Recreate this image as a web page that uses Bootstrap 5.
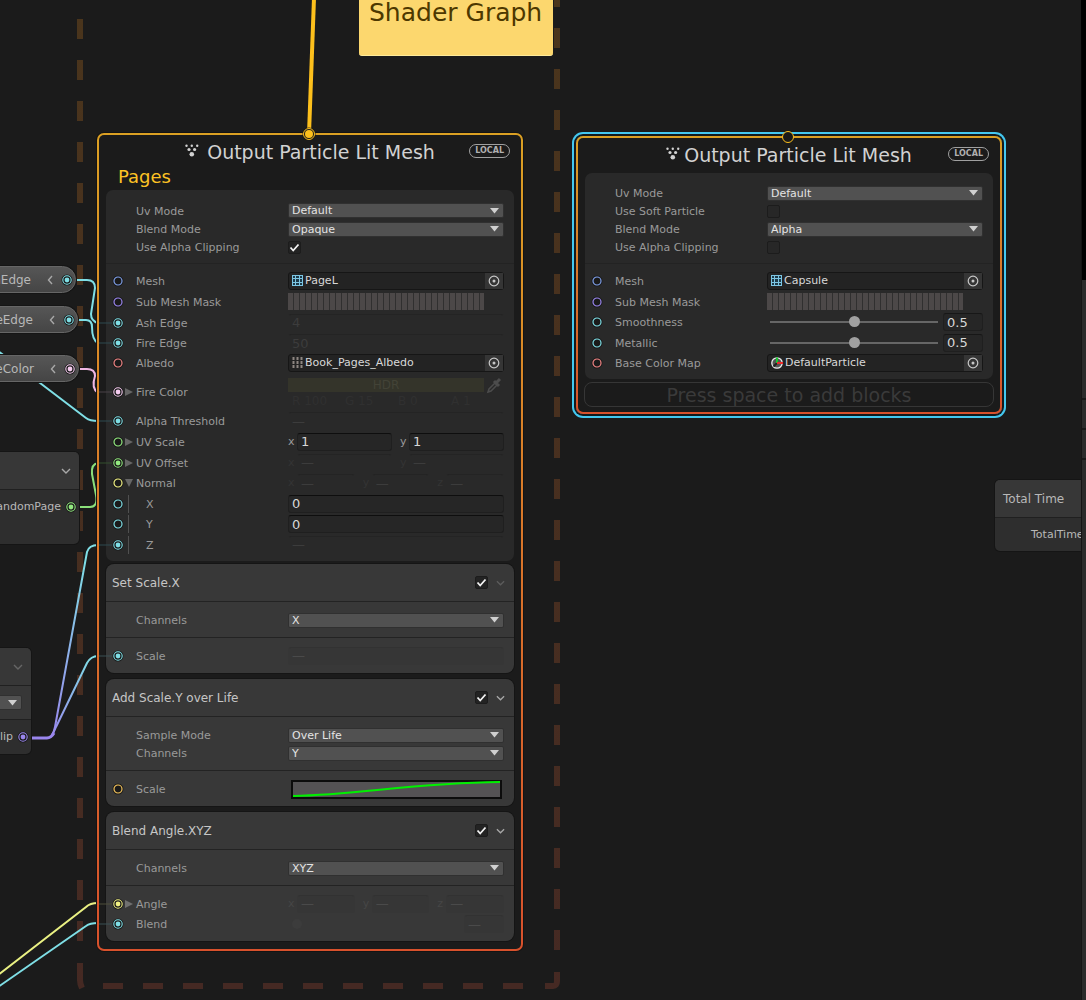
<!DOCTYPE html>
<html lang="en">
<head>
<meta charset="utf-8">
<meta name="viewport" content="width=device-width, initial-scale=1">
<title>VFX Graph</title>
<link href="https://cdn.jsdelivr.net/npm/bootstrap@5.3.0/dist/css/bootstrap.min.css" rel="stylesheet">
<style>
body { background: #1b1b1b; color: #9a9a9a; font: 11px/14px "DejaVu Sans", Verdana, sans-serif; }
.workspace { height: 100vh; min-height: 1000px; }
.canvas { min-width: 0; background: #1b1b1b; }
.inspector { width: 5px; background: #2b2b2b; border-left: 1px solid #151515; border-top: 280px solid #000; }
.inspector div { height: 120px; border-bottom: 2px solid #181818; }
.inspector div + div { height: 30px; }
.wires { width: 100%; height: 100%; overflow: visible; }

/* contexts */
.context { position: absolute; width: 426px; padding: 0 7px 8px; border: 2px solid transparent; border-radius: 7px;
  background: linear-gradient(#1b1b1b, #1b1b1b) padding-box, linear-gradient(#dba023, #d9762a 50%, #d8512c) border-box; box-shadow: 0 0 0 1px #131313; }
.ctx-pages { left: 97px; top: 133px; }
.ctx-capsule { left: 576px; top: 136px; padding-bottom: 5px; box-shadow: 0 0 0 2px #121a1e, 0 0 0 4px #44c8f0; }
.ctx-head { height: 31px; color: #d2d2d2; padding: 0 4px; }
.ctx-head h2 { font-size: 19px; line-height: 22px; font-weight: 400; margin: 0; padding-top: 2px; }
.side { flex: 1 1 0; min-width: 0; }
.pill-local { display: inline-block; font-size: 8px; line-height: 10px; font-weight: 700; color: #b0b0b0; border: 1px solid #a0a0a0; border-radius: 7px; padding: 1px 5px; }
.ctx-label { font-size: 18px; line-height: 22px; color: #fdc324; padding-left: 12px; margin-bottom: 2px; }
.flow-port { position: absolute; top: -8px; left: 50%; margin-left: -8px; z-index: 2; }

/* blocks */
.settings-box { background: #292929; border-radius: 7px; margin-bottom: 3px; }
.block { background: #383838; border-radius: 8px; margin-bottom: 6px; box-shadow: 0 0 0 1px #151515; }
.block:last-child { margin-bottom: 0; }
.block-head { height: 38px; border-bottom: 1px solid #232323; padding: 0 9px 0 6px; color: #c6c6c6; }
.block-head h3 { font-size: 12px; line-height: 16px; font-weight: 400; margin: 0; }
.sect { padding: 9px 0 8px; border-bottom: 1px solid #232323; }
.settings-box .sect { padding: 11px 0 7px; }
.sect-ports { padding: 7px 0; }
.settings-box .sect-ports { padding: 6px 0; }
.prop { display: flex; align-items: center; padding-right: 10px; }
.h18 { height: 18px; } .h19 { height: 19px; } .h20 { height: 20px; } .h21 { height: 21px; } .h38 { height: 38px; }
.port { width: 30px; height: 20px; flex: none; overflow: visible; }
.prop label, .prop .lbl { width: 152px; flex: none; white-space: nowrap; padding-top: 2px; }
.sub-prop label { padding-left: 10px; }
.field { flex: 1 1 0; min-width: 0; }

/* controls */
.pick { --bs-form-select-bg-img: none; appearance: none; width: 100%; height: 15px; padding: 0 16px 0 3px; font: 11px/13px "DejaVu Sans", Verdana, sans-serif; color: #e4e4e4; border: 1px solid #303030; border-radius: 2px;
  background: #515151 url("data:image/svg+xml,%3Csvg xmlns='http://www.w3.org/2000/svg' width='9' height='6'%3E%3Cpath d='M0 0h9L4.500 5.500z' fill='%23d0d0d0'/%3E%3C/svg%3E") no-repeat right 4px center; }
.tick.form-check-input { appearance: none; width: 13px; height: 13px; margin: 0; border: 1px solid #1c1c1c; border-radius: 2px; background-color: #272727; float: none; flex: none; }
.tick.form-check-input:checked { border-color: #1c1c1c; background: #232323 url("data:image/svg+xml,%3Csvg xmlns='http://www.w3.org/2000/svg' width='11' height='11'%3E%3Cpath d='M1.500 5.500l2.700 3L9.500 2.500' fill='none' stroke='%23f4f4f4' stroke-width='1.800'/%3E%3C/svg%3E") no-repeat center; }
.num { width: 100%; min-width: 0; height: 18px; padding: 0 3px; font: 13px/16px "DejaVu Sans", Verdana, sans-serif; color: #d8d8d8; background: #262626; border: 1px solid #1f1f1f; border-top-color: #0e0e0e; border-radius: 3px; }
.num-ghost { color: #3c3c3c; background: transparent; border-color: transparent; border-top-color: #242424; }
.block .num-ghost { color: #4a4a4a; background: #363636; border-top-color: #323232; }
.axis { flex: 1 1 0; min-width: 0; display: flex; align-items: center; }
.prop .axis label { width: 9px; padding: 0; }
.ghost label { color: #343434; }
.block .ghost label { color: #464646; }
.obj { height: 18px; background: #232323; border: 1px solid #161616; border-radius: 3px; color: #d8d8d8; padding-left: 3px; }
.obj span { margin-left: 2px; }
.obj button { width: 18px; height: 16px; background: #353535; border: 0; padding: 0; line-height: 0; margin-left: auto; }
.mask { width: 196px; height: 17px; background: repeating-linear-gradient(90deg, #4c4848 0 5px, #302f2f 5px 6px); }
.hdr { height: 14px; line-height: 14px; background: #34342a; color: #434337; text-align: center; font-size: 12px; }
.rgba { height: 15px; color: #303030; font-size: 12px; }
.curve { display: block; width: 212px; height: 20px; margin-left: 2px; }
.slide.form-range { appearance: none; height: 12px; margin: 0 5px 0 3px; flex: 1 1 0; min-width: 0; }
.slide::-webkit-slider-runnable-track { height: 2px !important; background: #666 !important; border-radius: 0 !important; }
.slide::-webkit-slider-thumb { width: 11px !important; height: 11px !important; margin-top: -5px !important; background: #a0a0a0 !important; box-shadow: none !important; }
.num-slide { width: 40px; flex: none; border-top-color: #171717; }
.drop-hint { height: 25px; border: 1px solid #363636; border-radius: 8px; color: #3a3a3a; font-size: 19px; line-height: 22px; text-align: center; margin: 0 -1px; background: none; width: calc(100% + 2px); padding: 0; }
.icon-btn { background: none; border: 0; padding: 0; line-height: 0; }

/* parameters and operators */
.param { position: absolute; height: 27px; width: 140px; padding-right: 2px; border: 1px solid #666; border-radius: 0 14px 14px 0; background: linear-gradient(#565656, #454545); color: #b8b8b8; font-size: 12px; box-shadow: 0 0 0 1px #151515; }
.p-ash { left: -64px; top: 266px; } .p-fire { left: -62px; top: 306px; } .p-color { left: -61px; top: 355px; }
.op { position: absolute; width: 140px; background: #2e2e2e; border-radius: 5px; box-shadow: 0 0 0 1px #151515; color: #b8b8b8; overflow: hidden; }
.op-head { height: 38px; background: #373737; border-bottom: 1px solid #202020; padding: 0 8px; font-size: 12px; }
.op-out { height: 34px; padding-right: 2px; }
.op-random { left: -61px; top: 452px; height: 92px; }
.op-flip { left: -109px; top: 648px; height: 106px; }
.op-flip .op-set { height: 34px; padding: 0 9px; background: #373737; border-bottom: 1px solid #202020; }
.op-time { left: 995px; top: 480px; height: 71px; }
.op-time .op-out { padding-left: 36px; }
.note { position: absolute; left: 359px; top: -60px; width: 194px; height: 116px; padding: 58px 0 0 10px; background: #fcd76e; border-bottom: 1px solid #ffeb9a; border-radius: 3px; color: #4d3800; font-size: 25px; line-height: 30px; white-space: nowrap; }
.c-blue { color: #7f9fe8; } .c-violet { color: #9a86ee; } .c-cyan { color: #7fdfe6; } .c-red { color: #f28585; } .c-pink { color: #f6cdf0; } .c-green { color: #93ea80; } .c-yellow { color: #f1f183; } .c-amber { color: #f3c35c; }
</style>
</head>
<body>
<svg width="0" height="0" class="position-absolute" aria-hidden="true">
  <defs>
    <symbol id="ring" viewBox="0 0 12 12"><circle cx="6" cy="6" r="5.500" fill="#1a1a1a"/><circle cx="6" cy="6" r="4" fill="none" stroke="currentColor" stroke-width="1.200"/></symbol>
    <symbol id="ring-on" viewBox="0 0 12 12"><circle cx="6" cy="6" r="5.500" fill="#1a1a1a"/><circle cx="6" cy="6" r="4.200" fill="none" stroke="currentColor" stroke-width="1.100"/><circle cx="6" cy="6" r="2.400" fill="currentColor"/></symbol>
    <symbol id="target" viewBox="0 0 12 12"><circle cx="6" cy="6" r="4.800" fill="none" stroke="#c8c8c8" stroke-width="1.200"/><circle cx="6" cy="6" r="1.500" fill="#c8c8c8"/></symbol>
    <symbol id="mesh" viewBox="0 0 11 11"><rect width="11" height="11" fill="#1d3a49"/><path d="M.5 0v11M3.500 0v11M7.500 0v11M10.500 0v11M0 .5h11M0 3.500h11M0 7.500h11M0 10.500h11" stroke="#7cc6e4" stroke-width="1"/></symbol>
    <symbol id="dots" viewBox="0 0 14 13"><g fill="#d2d2d2"><circle cx="1.500" cy="1.800" r="1.200"/><circle cx="6.800" cy="1.800" r="1.200"/><circle cx="12.200" cy="1.800" r="1.200"/><circle cx="4" cy="5.500" r="1.600"/><circle cx="9.600" cy="5.500" r="1.600"/><circle cx="6.800" cy="10.300" r="2.300"/></g></symbol>
    <symbol id="chev" viewBox="0 0 10 6"><path d="M1 1l4 4 4-4" fill="none" stroke="currentColor" stroke-width="1.400"/></symbol>
    <symbol id="chev-left" viewBox="0 0 6 10"><path d="M5 1L1.500 5 5 9" fill="none" stroke="#a8a8a8" stroke-width="1.400"/></symbol>
    <linearGradient id="flipwire" gradientUnits="userSpaceOnUse" x1="0" y1="738" x2="0" y2="560"><stop offset="0" stop-color="#9a86ee"/><stop offset="1" stop-color="#7fdfe6"/></linearGradient>
    <linearGradient id="flipwire2" gradientUnits="userSpaceOnUse" x1="0" y1="738" x2="0" y2="656"><stop offset="0" stop-color="#9a86ee"/><stop offset="1" stop-color="#7fdfe6"/></linearGradient>
    <linearGradient id="dash" gradientUnits="userSpaceOnUse" x1="0" y1="0" x2="0" y2="1000"><stop offset="0" stop-color="#4a351c"/><stop offset="1" stop-color="#452923"/></linearGradient>
  </defs>
</svg>

<div class="workspace d-flex overflow-hidden">
<main class="canvas flex-grow-1 position-relative overflow-hidden">
  <svg class="wires position-absolute top-0 start-0" fill="none" aria-hidden="true">
    <!-- system outline -->
    <g stroke="url(#dash)" stroke-width="6">
      <path d="M80 19V961M80.010 963" stroke-dasharray="20 21"/>
      <path d="M80 963V980Q80 984 82 988"/>
      <path d="M557 -13V952" stroke-dasharray="20 21"/>
      <path d="M556.990 972V981Q557 986 553 986H545"/>
    </g>
    <path d="M103 986H526" stroke="#452923" stroke-width="6" stroke-dasharray="20 20"/>
    <!-- links -->
    <g stroke-width="2" stroke="#7fdfe6">
      <path d="M77 280H87Q95 280 95 288L91 314Q91 321 98 323"/>
      <path d="M78 320H86Q92 320 92 327Q92 340 98 343"/>
      <path d="M-2 351L86 418Q90 421 98 421"/>
      <path d="M-2 987L86 926Q90 923 98 923"/>
      <path d="M-2 975L86 907Q90 903 98 903" stroke="#eaf183"/>
      <path d="M80 369H87Q95 369 95 376Q91 388 98 393" stroke="#f0b8e4"/>
      <path d="M80 507H90Q98 507 96 495L92 474Q91 464 98 463" stroke="#8be07a"/>
      <path d="M52 735Q54 732 55 727L87 552Q89 545 98 545" stroke="url(#flipwire)"/>
      <path d="M52 735Q54 732 56 727L87 663Q91 656 98 656" stroke="url(#flipwire2)"/>
      <path d="M32 738H47Q51 738 54 733" stroke="#9a86ee" stroke-width="3"/>
    </g>
    <path d="M314 -2L309 134" stroke="#fdc01c" stroke-width="4"/>
  </svg>

  <div class="note">Shader Graph</div>

  <div class="param p-ash d-flex align-items-center justify-content-end">AshEdge<svg width="6" height="10" class="ms-3 me-2"><use href="#chev-left"/></svg><svg width="12" height="12" class="c-cyan"><use href="#ring-on"/></svg></div>
  <div class="param p-fire d-flex align-items-center justify-content-end">FireEdge<svg width="6" height="10" class="ms-3 me-2"><use href="#chev-left"/></svg><svg width="12" height="12" class="c-cyan"><use href="#ring-on"/></svg></div>
  <div class="param p-color d-flex align-items-center justify-content-end">FireColor<svg width="6" height="10" class="ms-3 me-2"><use href="#chev-left"/></svg><svg width="12" height="12" class="c-pink"><use href="#ring-on"/></svg></div>

  <section class="op op-random">
    <div class="op-head d-flex align-items-center justify-content-end"><button class="icon-btn" aria-label="Collapse" style="color:#a8a8a8"><svg width="10" height="6"><use href="#chev"/></svg></button></div>
    <div class="op-out d-flex align-items-center justify-content-end">RandomPage<svg width="12" height="12" class="c-green ms-1"><use href="#ring-on"/></svg></div>
  </section>
  <section class="op op-flip">
    <div class="op-head d-flex align-items-center justify-content-end"><button class="icon-btn" aria-label="Collapse" style="color:#666"><svg width="10" height="6"><use href="#chev"/></svg></button></div>
    <div class="op-set d-flex align-items-center"><select class="form-select pick" aria-label="Type"><option></option></select></div>
    <div class="op-out d-flex align-items-center justify-content-end">Flip<svg width="12" height="12" class="c-violet ms-1"><use href="#ring-on"/></svg></div>
  </section>
  <section class="op op-time">
    <div class="op-head d-flex align-items-center">Total Time</div>
    <div class="op-out d-flex align-items-center">TotalTime</div>
  </section>

  <!-- Pages output -->
  <section class="context ctx-pages">
    <svg class="flow-port" width="14" height="14"><circle cx="7" cy="7" r="6.500" fill="#1a1a1a"/><circle cx="7" cy="7" r="5.500" fill="none" stroke="#fdc01c"/><circle cx="7" cy="7" r="4" fill="#fdc01c"/></svg>
    <header class="ctx-head d-flex align-items-center">
      <span class="side"></span>
      <svg width="14" height="13" class="me-2"><use href="#dots"/></svg><h2>Output Particle Lit Mesh</h2>
      <span class="side text-end"><span class="pill-local">LOCAL</span></span>
    </header>
    <div class="ctx-label">Pages</div>

    <div class="settings-box">
      <div class="sect">
        <div class="prop h19"><span class="port"></span><label for="a1">Uv Mode</label><div class="field"><select id="a1" class="form-select pick"><option>Default</option></select></div></div>
        <div class="prop h18"><span class="port"></span><label for="a2">Blend Mode</label><div class="field"><select id="a2" class="form-select pick"><option>Opaque</option></select></div></div>
        <div class="prop h18"><span class="port"></span><label for="a3">Use Alpha Clipping</label><input id="a3" type="checkbox" class="form-check-input tick" checked></div>
      </div>
      <div class="sect-ports">
        <div class="prop h21"><svg class="port c-blue"><use href="#ring" x="6" y="4" width="12" height="12"/></svg><span class="lbl">Mesh</span><div class="field obj d-flex align-items-center"><svg width="11" height="11"><use href="#mesh"/></svg><span>PageL</span><button aria-label="Select mesh"><svg width="12" height="12"><use href="#target"/></svg></button></div></div>
        <div class="prop h21"><svg class="port c-violet"><use href="#ring" x="6" y="4" width="12" height="12"/></svg><span class="lbl">Sub Mesh Mask</span><div class="mask"></div></div>
        <div class="prop h21"><svg class="port c-cyan"><path d="M-7 10H6" stroke="#2f4b50" stroke-width="1"/><use href="#ring-on" x="6" y="4" width="12" height="12"/></svg><label for="a4">Ash Edge</label><div class="field"><input id="a4" class="num num-ghost" value="4" readonly></div></div>
        <div class="prop h20"><svg class="port c-cyan"><path d="M-7 10H6" stroke="#2f4b50"/><use href="#ring-on" x="6" y="4" width="12" height="12"/></svg><label for="a5">Fire Edge</label><div class="field"><input id="a5" class="num num-ghost" value="50" readonly></div></div>
        <div class="prop h20"><svg class="port c-red"><use href="#ring" x="6" y="4" width="12" height="12"/></svg><span class="lbl">Albedo</span><div class="field obj d-flex align-items-center"><svg width="11" height="12"><path d="M1.500 0v12M5.500 0v12M9.500 0v12" stroke="#8d8681" stroke-width="2" stroke-dasharray="3 1"/></svg><span>Book_Pages_Albedo</span><button aria-label="Select texture"><svg width="12" height="12"><use href="#target"/></svg></button></div></div>
        <div class="prop h38"><svg class="port c-pink"><path d="M-7 10H6" stroke="#4a4249"/><use href="#ring-on" x="6" y="4" width="12" height="12"/><path d="M19 6v8l8-4z" fill="#666"/></svg><span class="lbl">Fire Color</span>
          <div class="field"><div class="d-flex align-items-center"><div class="hdr flex-grow-1">HDR</div><svg width="20" height="18" viewBox="0 0 20 18"><path d="M4 16l1-3 6-6 2 2-6 6z" fill="none" stroke="#4c4c4c" stroke-width="1.500"/><path d="M10 5l5 5M12 7l4-4" stroke="#4c4c4c" stroke-width="3"/></svg></div>
          <div class="rgba d-flex ps-1"><span class="side">R 100</span><span class="side">G 15</span><span class="side">B 0</span><span class="side">A 1</span></div></div></div>
        <div class="prop h20"><svg class="port c-cyan"><path d="M-7 10H6" stroke="#2f4b50"/><use href="#ring-on" x="6" y="4" width="12" height="12"/></svg><label for="a6">Alpha Threshold</label><div class="field"><input id="a6" class="num num-ghost" value="—" readonly></div></div>
        <div class="prop h21"><svg class="port c-green"><use href="#ring" x="6" y="4" width="12" height="12"/><path d="M19 6v8l8-4z" fill="#666"/></svg><span class="lbl">UV Scale</span><div class="field d-flex gap-2"><div class="axis"><label for="b1">x</label><input id="b1" class="num" value="1"></div><div class="axis"><label for="b2">y</label><input id="b2" class="num" value="1"></div></div></div>
        <div class="prop h21"><svg class="port c-green"><path d="M-7 10H6" stroke="#34502f"/><use href="#ring-on" x="6" y="4" width="12" height="12"/><path d="M19 6v8l8-4z" fill="#666"/></svg><span class="lbl">UV Offset</span><div class="field ghost d-flex gap-2"><div class="axis"><label for="b3">x</label><input id="b3" class="num num-ghost" value="—" readonly></div><div class="axis"><label for="b4">y</label><input id="b4" class="num num-ghost" value="—" readonly></div></div></div>
        <div class="prop h20"><svg class="port c-yellow"><use href="#ring" x="6" y="4" width="12" height="12"/><path d="M19 6h8l-4 8z" fill="#666"/></svg><span class="lbl">Normal</span><div class="field ghost d-flex gap-2"><div class="axis"><label for="b5">x</label><input id="b5" class="num num-ghost" value="—" readonly></div><div class="axis"><label for="b6">y</label><input id="b6" class="num num-ghost" value="—" readonly></div><div class="axis"><label for="b7">z</label><input id="b7" class="num num-ghost" value="—" readonly></div></div></div>
        <div class="prop sub-prop h21"><svg class="port c-cyan"><use href="#ring" x="6" y="4" width="12" height="12"/><path d="M22.500 1v18" stroke="#505050"/></svg><label for="b8">X</label><div class="field"><input id="b8" class="num" value="0"></div></div>
        <div class="prop sub-prop h20"><svg class="port c-cyan"><use href="#ring" x="6" y="4" width="12" height="12"/><path d="M22.500 1v18" stroke="#505050"/></svg><label for="b9">Y</label><div class="field"><input id="b9" class="num" value="0"></div></div>
        <div class="prop sub-prop h21"><svg class="port c-cyan"><path d="M-7 10H6" stroke="#2f4b50"/><use href="#ring-on" x="6" y="4" width="12" height="12"/><path d="M22.500 1v18" stroke="#505050"/></svg><label for="b10">Z</label><div class="field"><input id="b10" class="num num-ghost" value="—" readonly></div></div>
      </div>
    </div>

    <article class="block">
      <div class="block-head d-flex align-items-center"><h3 class="flex-grow-1">Set Scale.X</h3><input type="checkbox" class="form-check-input tick" checked aria-label="Enable Set Scale.X"><button class="icon-btn ms-2" aria-label="Collapse" style="color:#5c5c5c"><svg width="9" height="6"><use href="#chev"/></svg></button></div>
      <div class="sect"><div class="prop h18"><span class="port"></span><label for="c1">Channels</label><div class="field"><select id="c1" class="form-select pick"><option>X</option></select></div></div></div>
      <div class="sect-ports"><div class="prop h21"><svg class="port c-cyan"><path d="M-7 10H6" stroke="#3a5054"/><use href="#ring-on" x="6" y="4" width="12" height="12"/></svg><label for="c2">Scale</label><div class="field"><input id="c2" class="num num-ghost" value="—" readonly></div></div></div>
    </article>

    <article class="block">
      <div class="block-head d-flex align-items-center"><h3 class="flex-grow-1">Add Scale.Y over Life</h3><input type="checkbox" class="form-check-input tick" checked aria-label="Enable Add Scale.Y"><button class="icon-btn ms-2" aria-label="Collapse" style="color:#a8a8a8"><svg width="9" height="6"><use href="#chev"/></svg></button></div>
      <div class="sect"><div class="prop h18"><span class="port"></span><label for="d1">Sample Mode</label><div class="field"><select id="d1" class="form-select pick"><option>Over Life</option></select></div></div>
      <div class="prop h18"><span class="port"></span><label for="d2">Channels</label><div class="field"><select id="d2" class="form-select pick"><option>Y</option></select></div></div></div>
      <div class="sect-ports"><div class="prop h21"><svg class="port c-amber"><use href="#ring" x="6" y="4" width="12" height="12"/></svg><span class="lbl">Scale</span><div class="field"><svg class="curve" viewBox="0 0 212 20"><rect x="2" y="2" width="209" height="17" fill="#545254" stroke="#0c0c0c" stroke-width="2"/><path d="M3 17C70 16 120 4 210 3" fill="none" stroke="#00f000" stroke-width="2"/></svg></div></div></div>
    </article>

    <article class="block">
      <div class="block-head d-flex align-items-center"><h3 class="flex-grow-1">Blend Angle.XYZ</h3><input type="checkbox" class="form-check-input tick" checked aria-label="Enable Blend Angle"><button class="icon-btn ms-2" aria-label="Collapse" style="color:#a8a8a8"><svg width="9" height="6"><use href="#chev"/></svg></button></div>
      <div class="sect"><div class="prop h18"><span class="port"></span><label for="e1">Channels</label><div class="field"><select id="e1" class="form-select pick"><option>XYZ</option></select></div></div></div>
      <div class="sect-ports">
        <div class="prop h21"><svg class="port c-yellow"><path d="M-7 10H6" stroke="#4e4e3a"/><use href="#ring-on" x="6" y="4" width="12" height="12"/><path d="M19 6v8l8-4z" fill="#707070"/></svg><span class="lbl">Angle</span><div class="field ghost d-flex gap-2"><div class="axis"><label for="e2">x</label><input id="e2" class="num num-ghost" value="—" readonly></div><div class="axis"><label for="e3">y</label><input id="e3" class="num num-ghost" value="—" readonly></div><div class="axis"><label for="e4">z</label><input id="e4" class="num num-ghost" value="—" readonly></div></div></div>
        <div class="prop h20"><svg class="port c-cyan"><path d="M-7 10H6" stroke="#3a5054"/><use href="#ring-on" x="6" y="4" width="12" height="12"/></svg><label for="e5">Blend</label><div class="field d-flex align-items-center justify-content-between"><svg width="16" height="12"><circle cx="9" cy="6" r="5" fill="#3c3c3c"/></svg><input id="e5" class="num num-ghost num-slide" value="—" readonly></div></div>
      </div>
    </article>
  </section>

  <!-- Capsule output, selected -->
  <section class="context ctx-capsule">
    <svg class="flow-port" width="14" height="14"><circle cx="7" cy="7" r="5.500" fill="#1a1a1a" stroke="#fdc01c"/></svg>
    <header class="ctx-head d-flex align-items-center mb-1">
      <span class="side"></span>
      <svg width="14" height="13" class="me-1"><use href="#dots"/></svg><h2>Output Particle Lit Mesh</h2>
      <span class="side text-end"><span class="pill-local">LOCAL</span></span>
    </header>
    <div class="settings-box">
      <div class="sect">
        <div class="prop h18"><span class="port"></span><label for="f1">Uv Mode</label><div class="field"><select id="f1" class="form-select pick"><option>Default</option></select></div></div>
        <div class="prop h18"><span class="port"></span><label for="f2">Use Soft Particle</label><input id="f2" type="checkbox" class="form-check-input tick"></div>
        <div class="prop h18"><span class="port"></span><label for="f3">Blend Mode</label><div class="field"><select id="f3" class="form-select pick"><option>Alpha</option></select></div></div>
        <div class="prop h18"><span class="port"></span><label for="f4">Use Alpha Clipping</label><input id="f4" type="checkbox" class="form-check-input tick"></div>
      </div>
      <div class="sect-ports">
        <div class="prop h21"><svg class="port c-blue"><use href="#ring" x="6" y="4" width="12" height="12"/></svg><span class="lbl">Mesh</span><div class="field obj d-flex align-items-center"><svg width="11" height="11"><use href="#mesh"/></svg><span>Capsule</span><button aria-label="Select mesh"><svg width="12" height="12"><use href="#target"/></svg></button></div></div>
        <div class="prop h21"><svg class="port c-violet"><use href="#ring" x="6" y="4" width="12" height="12"/></svg><span class="lbl">Sub Mesh Mask</span><div class="mask"></div></div>
        <div class="prop h20"><svg class="port c-cyan"><use href="#ring" x="6" y="4" width="12" height="12"/></svg><label for="f5">Smoothness</label><div class="field d-flex align-items-center"><input id="f5" type="range" class="form-range slide" value="50"><input class="num num-slide" value="0.5" aria-label="Smoothness value"></div></div>
        <div class="prop h21"><svg class="port c-cyan"><use href="#ring" x="6" y="4" width="12" height="12"/></svg><label for="f6">Metallic</label><div class="field d-flex align-items-center"><input id="f6" type="range" class="form-range slide" value="50"><input class="num num-slide" value="0.5" aria-label="Metallic value"></div></div>
        <div class="prop h20"><svg class="port c-red"><use href="#ring" x="6" y="4" width="12" height="12"/></svg><span class="lbl">Base Color Map</span><div class="field obj d-flex align-items-center"><svg width="12" height="12" viewBox="0 0 12 12"><circle cx="6" cy="6" r="5.200" fill="#555" stroke="#eee" stroke-width="1.300"/><path d="M6 6L2.500 9.500" stroke="#222" stroke-width="2"/><path d="M6 6V.5" stroke="#19c832" stroke-width="2"/><path d="M6 6h6" stroke="#f02a2a" stroke-width="2"/></svg><span>DefaultParticle</span><button aria-label="Select texture"><svg width="12" height="12"><use href="#target"/></svg></button></div></div>
      </div>
    </div>
    <button class="drop-hint d-block">Press space to add blocks</button>
  </section>
</main>
<aside class="inspector flex-shrink-0"><div></div><div></div><div></div></aside>
</div>
<script src="https://cdn.jsdelivr.net/npm/bootstrap@5.3.0/dist/js/bootstrap.bundle.min.js"></script>
</body>
</html>
